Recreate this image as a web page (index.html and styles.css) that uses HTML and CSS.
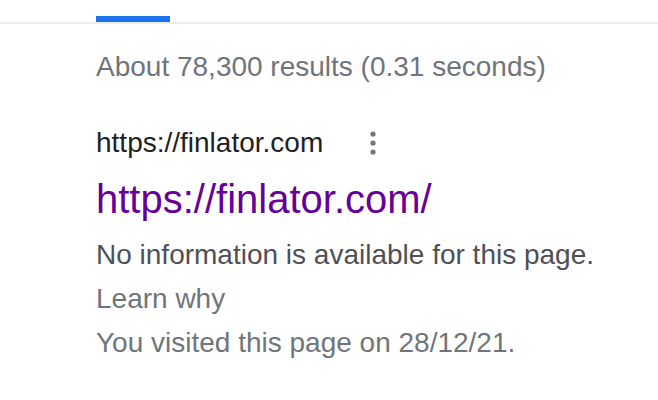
FILE: index.html
```html
<!DOCTYPE html>
<html>
<head>
<meta charset="utf-8">
<link rel="stylesheet" href="styles.css">
</head>
<body>
<div class="tabs">
  <div class="tab-active"></div>
</div>
<main class="content">
  <div class="stats">About 78,300 results (0.31 seconds)</div>
  <div class="result">
    <div class="cite-row">
      <cite class="cite">https://finlator.com</cite>
      <span class="more" aria-label="More options">
        <svg width="10" height="24" viewBox="0 0 10 24"><circle cx="5" cy="3" r="2.6"/><circle cx="5" cy="12" r="2.6"/><circle cx="5" cy="21" r="2.6"/></svg>
      </span>
    </div>
    <a class="title" href="#">https://finlator.com/</a>
    <div class="snippet">No information is available for this page.</div>
    <a class="learn" href="#">Learn why</a>
    <div class="visited">You visited this page on 28/12/21.</div>
  </div>
</main>
</body>
</html>
```
FILE: styles.css
```css
* { box-sizing: border-box; }
html, body { margin: 0; padding: 0; background: #fff; }
body { font-family: "Liberation Sans", Arial, sans-serif; }
.tabs {
  height: 24px;
  border-bottom: 2px solid #ebebeb;
  display: flex;
  align-items: flex-end;
  padding-left: 96px;
}
.tab-active {
  width: 74px;
  height: 6px;
  background: #1a73e8;
}
.content { padding-left: 96px; display: flex; flex-direction: column; }
.stats {
  margin-top: 22px;
  font-size: 28px;
  line-height: 42px;
  color: #70757a;
}
.result { margin-top: 34px; display: flex; flex-direction: column; }
.cite-row { display: flex; align-items: center; height: 42px; }
.cite {
  font-style: normal;
  font-size: 28px;
  line-height: 42px;
  color: #202124;
}
.more { display: flex; margin-left: 45px; fill: #70757a; }
.title {
  margin-top: 10px;
  font-size: 40px;
  line-height: 50px;
  color: #660099;
  text-decoration: none;
}
.snippet, .learn, .visited { font-size: 28px; line-height: 44px; }
.snippet { margin-top: 9px; color: #4d5156; }
.learn { color: #70757a; text-decoration: none; }
.visited { color: #70757a; }
```
